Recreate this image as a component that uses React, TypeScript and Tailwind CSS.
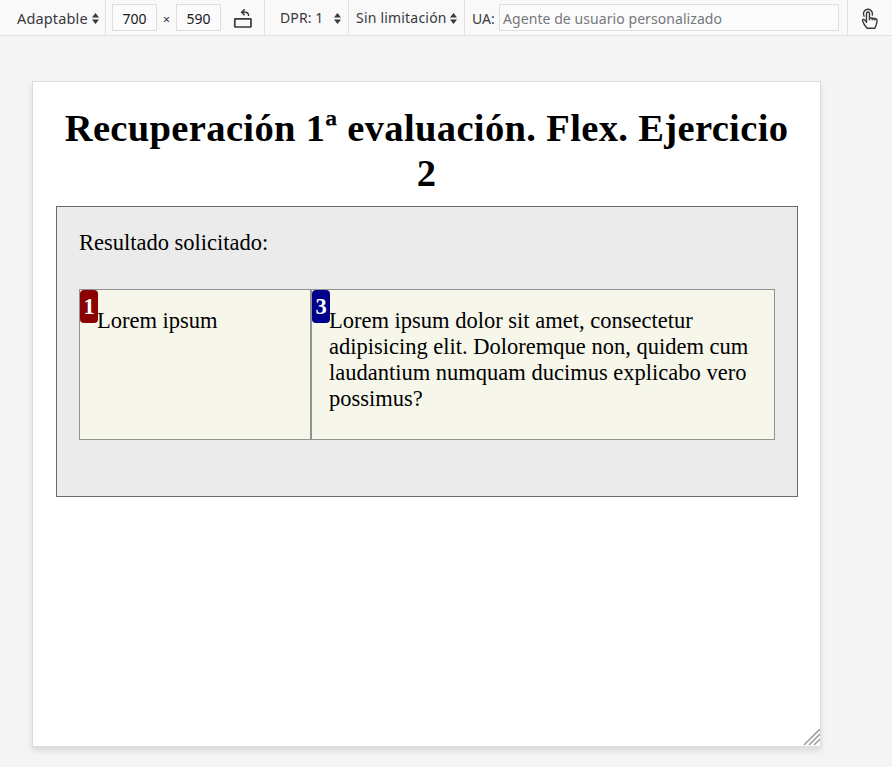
import type { ReactNode } from "react";

function Sort() {
  return (
    <svg width="7" height="11" viewBox="0 0 7 11" className="mt-px shrink-0" fill="#38383d">
      <path d="M3.5 0 7 4.5H0ZM3.5 11 0 6.5h7Z" />
    </svg>
  );
}

function Field({ children }: { children: ReactNode }) {
  return (
    <div className="flex h-[27px] w-[45px] items-center justify-center border border-[#dedede] bg-[#fbfbfb] pt-[2px] text-[#18181a]">
      {children}
    </div>
  );
}

function Toolbar() {
  return (
    <header className="flex h-9 border-b border-[#e0e0e2] bg-[#f9f9fa] font-['Noto_Sans','Open_Sans',sans-serif] text-[14px] leading-[20px] text-[#38383d] whitespace-nowrap">
      <div className="flex w-[106px] items-center border-r border-[#e0e0e2] pl-[17px]">
        <span className="w-[75px] text-[14.5px] tracking-[0.15px]">Adaptable</span>
        <Sort />
      </div>
      <div className="flex w-[159px] items-center border-r border-[#e0e0e2] pl-[6px]">
        <Field>700</Field>
        <span className="w-[19px] pt-[2px] text-center text-[13px]">×</span>
        <Field>590</Field>
        <svg width="20" height="22" viewBox="0 0 20 22" className="ml-[12px]" fill="none" stroke="#38383d">
          <rect x="1.8" y="11.8" width="16.2" height="8.2" rx=".6" strokeWidth="1.7" />
          <path d="M9 5.3h3.2q3.4 0 3.4 3.7" strokeWidth="1.4" />
          <path d="M11.6 2.4 8.7 5.3l2.9 2.9" strokeWidth="1.5" />
        </svg>
      </div>
      <div className="flex w-[84px] items-center border-r border-[#e0e0e2] pl-[15px]">
        <span className="w-[54px] tracking-[0.1px]">DPR: 1</span>
        <Sort />
      </div>
      <div className="flex w-[116px] items-center border-r border-[#e0e0e2] pl-[7px]">
        <span className="w-[94px] tracking-[0.2px]">Sin limitación</span>
        <Sort />
      </div>
      <div className="flex w-[383px] items-center border-r border-[#e0e0e2] pl-[7px]">
        <span className="w-[27px] pt-[2px]">UA:</span>
        <div className="flex h-[27px] w-[340px] items-center border border-[#dedede] bg-[#fbfbfb] pt-[2px] pl-[3px] tracking-[0.07px] text-[#77777b]">
          Agente de usuario personalizado
        </div>
      </div>
      <svg width="18" height="22" viewBox="0 0 18 22" className="mt-[8px] ml-[13px]" fill="none" stroke="#38383d" strokeWidth="1.4" strokeLinejoin="round" strokeLinecap="round">
        <path d="M3.1 8.2A4.5 4.5 0 1 1 11.4 5.7v1.4" />
        <path d="M5.5 13.7V5.5a1.5 1.5 0 0 1 3 0v4.2l6.2 1.1q1.6.4 1.4 2l-.7 3.4-1.5 4H6.1L3.2 16.5 1.7 13q-.5-1.5.7-1.6 1 0 1.7 1l1.4 1.8M8.5 9.7v2.1M11.2 10.2v1.5M13.8 10.7v1.4" />
      </svg>
    </header>
  );
}

function Badge({ n, color }: { n: number; color: string }) {
  return (
    <span className={`flex h-[33px] w-[18px] shrink-0 items-center justify-center rounded-[4px] font-bold text-white ${color}`}>
      {n}
    </span>
  );
}

export default function App() {
  return (
    <div className="h-[767px] w-[892px] overflow-hidden bg-[#f4f4f4]">
      <Toolbar />
      <main className="relative mt-[45px] ml-[32px] h-[666px] w-[789px] border border-[#dddddd] bg-white px-[23px] pt-[24px] font-['Liberation_Serif',serif] text-[22.5px] leading-[26px] text-black shadow-[0_4px_6px_rgba(0,0,0,0.10)]">
        <h1 className="text-center text-[38.6px] leading-[45px] font-bold tracking-[0.33px]">Recuperación 1ª evaluación. Flex. Ejercicio 2</h1>
        <section className="mt-[10px] h-[291px] w-[742px] border border-[#6b6b6b] bg-[#ebebeb] px-[22px] pt-[23px]">
          <p>Resultado solicitado:</p>
          <div className="mt-[33px] flex h-[151px] w-[696px]">
            <article className="flex w-[232px] border border-[#929292] bg-[#f6f6ea]">
              <Badge n={1} color="bg-[#8b0000]" />
              <p className="-ml-px pt-[18px]">Lorem ipsum</p>
            </article>
            <article className="flex w-[464px] border border-[#929292] bg-[#f6f6ea]">
              <Badge n={3} color="bg-[#00008b]" />
              <p className="-ml-px w-[428px] pt-[18px]">
                Lorem ipsum dolor sit amet, consectetur adipisicing elit. Doloremque non, quidem cum laudantium numquam ducimus explicabo vero possimus?
              </p>
            </article>
          </div>
        </section>
        <svg width="17" height="17" viewBox="0 0 17 17" className="absolute right-0 bottom-0" fill="none" stroke="#a0a0a0" strokeWidth="1.6">
          <path d="M1 16 17 0M6 16 17 5M11 16l6-6" />
        </svg>
      </main>
    </div>
  );
}
